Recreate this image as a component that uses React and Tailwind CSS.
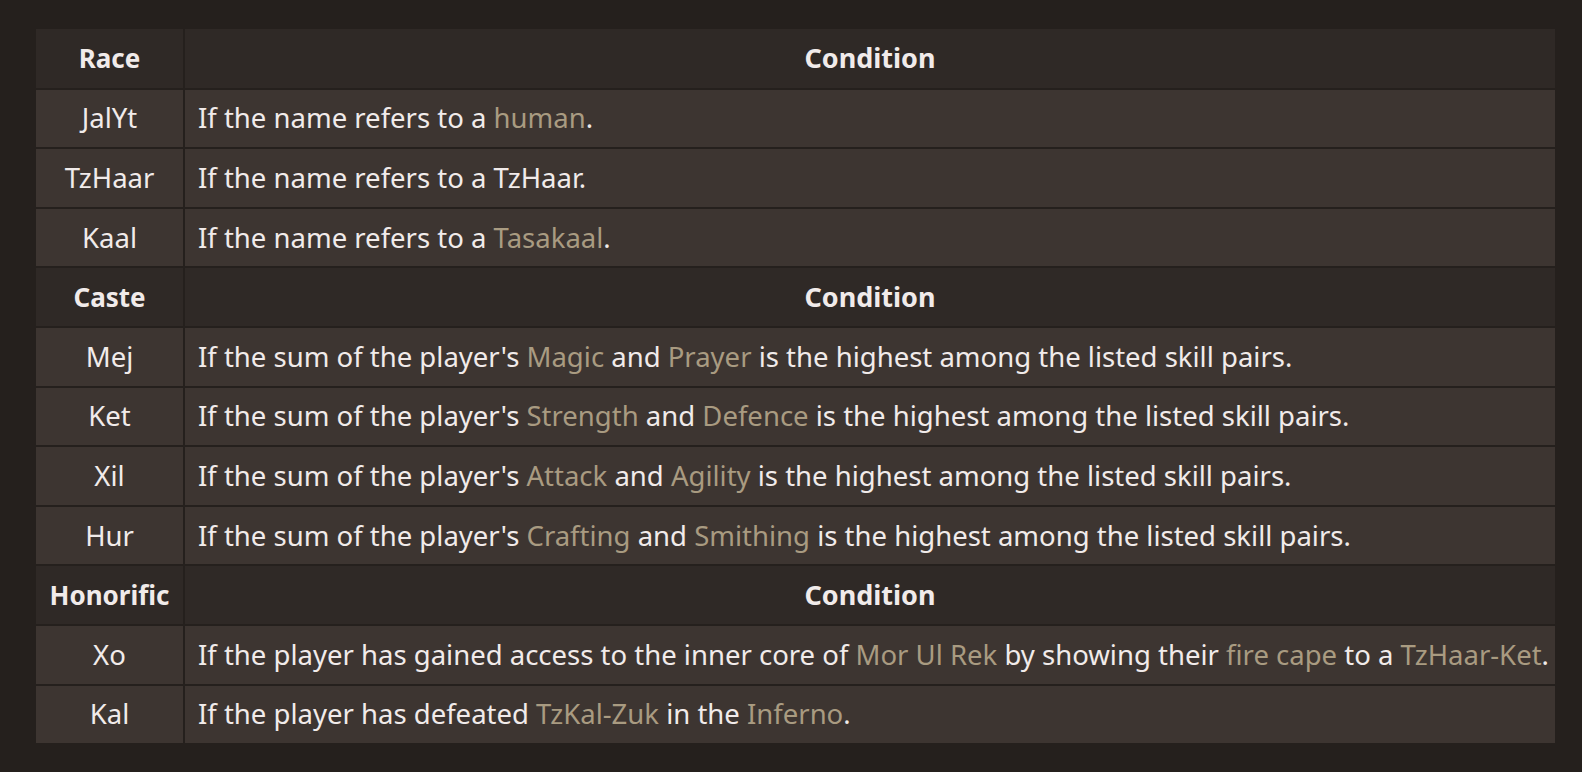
import React from "react";

const L = ({ children }) => <span className="text-[#a99b81]">{children}</span>;

const sections = [
  {
    head: "Race",
    rows: [
      ["JalYt", <>If the name refers to a <L>human</L>.</>],
      ["TzHaar", <>If the name refers to a TzHaar.</>],
      ["Kaal", <>If the name refers to a <L>Tasakaal</L>.</>],
    ],
  },
  {
    head: "Caste",
    rows: [
      ["Mej", <>If the sum of the player's <L>Magic</L> and <L>Prayer</L> is the highest among the listed skill pairs.</>],
      ["Ket", <>If the sum of the player's <L>Strength</L> and <L>Defence</L> is the highest among the listed skill pairs.</>],
      ["Xil", <>If the sum of the player's <L>Attack</L> and <L>Agility</L> is the highest among the listed skill pairs.</>],
      ["Hur", <>If the sum of the player's <L>Crafting</L> and <L>Smithing</L> is the highest among the listed skill pairs.</>],
    ],
  },
  {
    head: "Honorific",
    rows: [
      ["Xo", <>If the player has gained access to the inner core of <L>Mor Ul Rek</L> by showing their <L>fire cape</L> to a <L>TzHaar-Ket</L>.</>],
      ["Kal", <>If the player has defeated <L>TzKal-Zuk</L> in the <L>Inferno</L>.</>],
    ],
  },
];

export default function App() {
  return (
    <div
      className="w-[1582px] h-[772px] bg-[#25201d] pt-[29px] pl-[36px] text-[#f1ebea]"
      style={{ fontFamily: '"Noto Sans", "Open Sans", sans-serif' }}
    >
      <table className="w-[1519px] border-collapse text-[27.5px] leading-[32px]">
        <tbody>
          {sections.map((s) =>
            [
              <tr key={s.head} className="bg-[#2f2926] h-[59.6px]">
                <th className="w-[148px] border-2 border-[#25201d] border-t-0 border-l-0 font-bold text-center px-1 text-[26px]">
                  {s.head}
                </th>
                <th className="border-2 border-[#25201d] border-t-0 border-r-0 font-bold text-center px-3 text-[27px]">
                  Condition
                </th>
              </tr>,
              ...s.rows.map(([a, b]) => (
                <tr key={s.head + a} className="bg-[#3d3531] h-[59.6px]">
                  <td className="border-2 border-[#25201d] border-l-0 text-center px-1">{a}</td>
                  <td className="border-2 border-[#25201d] border-r-0 pl-[13px] pr-1 whitespace-nowrap">{b}</td>
                </tr>
              )),
            ]
          )}
        </tbody>
      </table>
    </div>
  );
}
